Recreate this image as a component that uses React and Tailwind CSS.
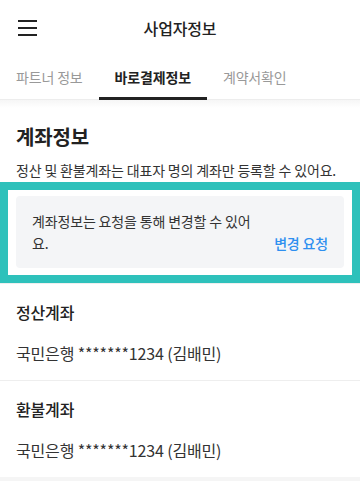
export default function App() {
  const font = { fontFamily: '"Noto Sans CJK KR", "Noto Sans", sans-serif' }
  const tabs = ['파트너 정보', '바로결제정보', '계약서확인']
  const accounts = [
    { label: '정산계좌', value: '국민은행 *******1234 (김배민)' },
    { label: '환불계좌', value: '국민은행 *******1234 (김배민)' },
  ]
  return (
    <div style={font} className="w-[360px] bg-white text-[#222] tracking-[-0.01em]">
      <div className="grid grid-cols-[56px_1fr_56px] items-center h-14">
        <div className="pl-[18px] flex flex-col gap-[5px]">
          <span className="block w-[19px] h-[2px] bg-[#222]" />
          <span className="block w-[19px] h-[2px] bg-[#222]" />
          <span className="block w-[19px] h-[2px] bg-[#222]" />
        </div>
        <div className="text-center text-[16px] font-medium leading-6">사업자정보</div>
        <div />
      </div>
      <div className="flex h-[44px] border-b border-[#ededed]">
        {tabs.map((t, i) => (
          <div key={t} className={`relative px-4 flex items-center text-[14px] ${i === 1 ? 'font-bold text-[#222]' : 'text-[#999]'}`}>
            {t}
            {i === 1 && <span className="absolute left-0 right-0 bottom-[-1px] h-[3px] bg-[#222]" />}
          </div>
        ))}
      </div>
      <div className="h-2 bg-gradient-to-b from-[#f6f6f6] to-white" />
      <div className="px-4 pt-[15px]">
        <div className="text-[20px] font-bold leading-7">계좌정보</div>
        <div className="mt-[9px] text-[14px] leading-5 text-[#333]">정산 및 환불계좌는 대표자 명의 계좌만 등록할 수 있어요.</div>
      </div>
      <div className="mt-[2px] border-8 border-[#2ec1bb] px-2 pt-[6px] pb-[7px]">
        <div className="flex items-end justify-between bg-[#f4f5f7] rounded-[4px] px-4 py-[14px]">
          <div className="w-[222px] text-[14px] leading-[22px] text-[#333]">계좌정보는 요청을 통해 변경할 수 있어요.</div>
          <div className="text-[14px] leading-[22px] font-medium text-[#2e8ff0]">변경 요청</div>
        </div>
      </div>
      <div className="border-t border-[#eeeeee]">
        {accounts.map((a, i) => (
          <div key={a.label} className={`px-4 pt-4 pb-[15px] ${i > 0 ? 'border-t border-[#eeeeee]' : ''}`}>
            <div className="text-[16px] font-medium leading-6">{a.label}</div>
            <div className="mt-[17px] text-[16px] leading-6 text-[#333]">{a.value}</div>
          </div>
        ))}
      </div>
      <div className="h-2 bg-[#f5f5f5]" />
    </div>
  )
}
